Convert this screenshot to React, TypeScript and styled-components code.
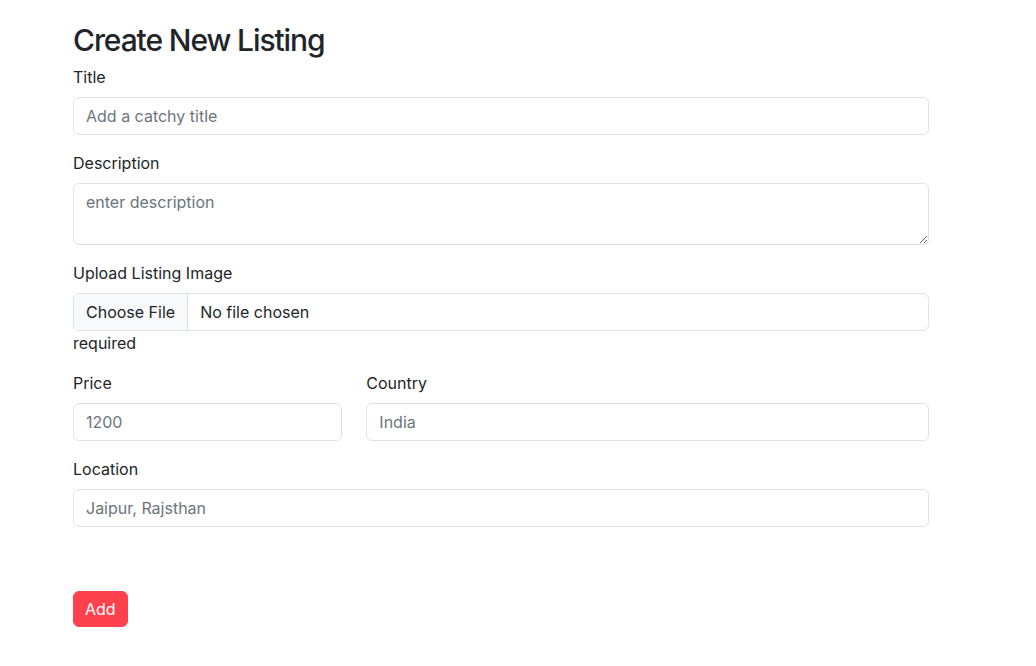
import React from "react";
import styled, { createGlobalStyle } from "styled-components";

const GlobalStyle = createGlobalStyle`
  * {
    box-sizing: border-box;
  }

  body {
    margin: 0;
    background: #fff;
    color: #212529;
    font-family: Inter, "Noto Sans", sans-serif;
    font-size: 16px;
    line-height: 1.5;
  }
`;

const Page = styled.div`
  width: 856px;
  margin-left: 73px;
  padding-top: 21px;
  padding-bottom: 39px;
`;

const Heading = styled.h1`
  margin: 0 0 6px;
  font-size: 30px;
  font-weight: 500;
  line-height: 38px;
  letter-spacing: -1.1px;
`;

const Field = styled.div<{ $gap?: number }>`
  margin-bottom: ${(p) => (p.$gap ?? 16)}px;
`;

const Label = styled.label`
  display: block;
  margin-bottom: 8px;
`;

const Input = styled.input`
  display: block;
  width: 100%;
  height: 38px;
  padding: 6px 12px;
  font: inherit;
  color: #212529;
  background: #fff;
  border: 1px solid #dee2e6;
  border-radius: 6px;
  outline: none;

  &::placeholder {
    color: #6c757d;
  }

  &::file-selector-button {
    height: 36px;
    padding: 6px 12px;
    margin: -6px 12px -6px -12px;
    font: inherit;
    color: #212529;
    background: #f8f9fa;
    border: 0;
    border-right: 1px solid #dee2e6;
    border-radius: 0;
  }
`;

const TextArea = styled.textarea`
  display: block;
  width: 100%;
  height: 62px;
  padding: 6px 12px;
  font: inherit;
  color: #212529;
  border: 1px solid #dee2e6;
  border-radius: 6px;
  outline: none;

  &::placeholder {
    color: #6c757d;
  }
`;

const Note = styled.div`
  line-height: 24px;
`;

const Row = styled.div`
  display: grid;
  grid-template-columns: calc((100% + 24px) / 3 - 24px) 1fr;
  column-gap: 24px;
  margin-top: 16px;
`;

const AddButton = styled.button`
  margin-top: 48px;
  height: 36px;
  padding: 0 11px;
  font: inherit;
  color: #fff;
  background: #fe424d;
  border: 1px solid #fe424d;
  border-radius: 6px;
  cursor: pointer;
`;

export default function App() {
  return (
    <>
      <GlobalStyle />
      <Page>
        <Heading>Create New Listing</Heading>
        <form onSubmit={(e) => e.preventDefault()}>
          <Field>
            <Label htmlFor="title">Title</Label>
            <Input id="title" placeholder="Add a catchy title" />
          </Field>
          <Field>
            <Label htmlFor="description">Description</Label>
            <TextArea id="description" placeholder="enter description" />
          </Field>
          <Field $gap={0}>
            <Label htmlFor="image">Upload Listing Image</Label>
            <Input id="image" type="file" />
            <Note>required</Note>
          </Field>
          <Row>
            <Field>
              <Label htmlFor="price">Price</Label>
              <Input id="price" placeholder="1200" />
            </Field>
            <Field>
              <Label htmlFor="country">Country</Label>
              <Input id="country" placeholder="India" />
            </Field>
          </Row>
          <Field>
            <Label htmlFor="location">Location</Label>
            <Input id="location" placeholder="Jaipur, Rajsthan" />
          </Field>
          <AddButton type="submit">Add</AddButton>
        </form>
      </Page>
    </>
  );
}
